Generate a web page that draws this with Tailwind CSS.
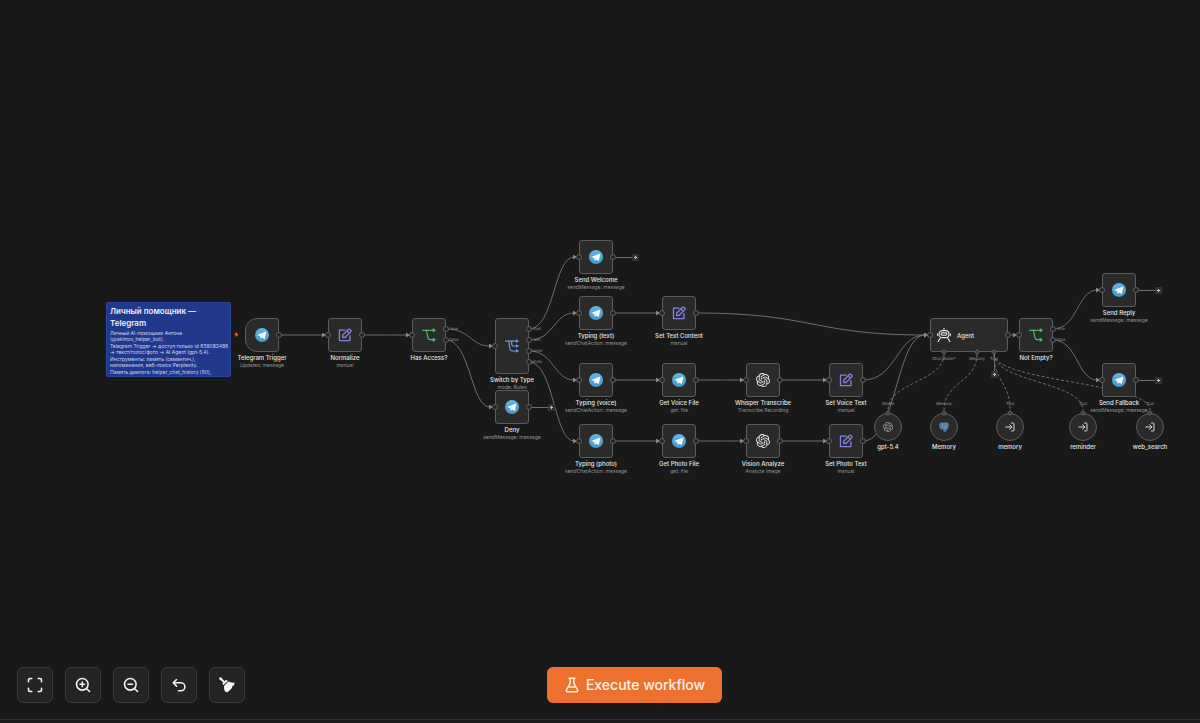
<!DOCTYPE html>
<html lang="ru">
<head>
    <meta charset="UTF-8">
    <meta name="viewport" content="width=device-width, initial-scale=1.0">
    <title>Личный помощник — Telegram</title>
    <script src="https://cdn.jsdelivr.net/npm/@tailwindcss/browser@4"></script>
</head>
<body class="bg-[#191919] text-[#e6e6e6] min-h-screen flex flex-col font-['Inter','Liberation_Sans',sans-serif]">

    <!-- Icons -->
    <svg class="absolute size-0" xmlns="http://www.w3.org/2000/svg" aria-hidden="true">
        <defs>
            <linearGradient id="tg-fill" x1="0" y1="0" x2="0" y2="1">
                <stop offset="0" stop-color="#62b6e6"/>
                <stop offset="1" stop-color="#4398cd"/>
            </linearGradient>
        </defs>
        <symbol id="telegram" viewBox="0 0 24 24">
            <circle cx="12" cy="12" r="12" fill="url(#tg-fill)"/>
            <path d="M4.8 11.7 18.2 6.3c.7-.2 1.2.2 1 1.1l-2.2 10.6c-.2.8-.7 1-1.3.6l-3.4-2.5-1.7 1.7c-.4.4-.9.3-1-.3l-1.1-3.8-3.5-1.1c-.7-.2-.7-.7-.2-.9Z" fill="#fff"/>
            <path d="m9 13.6 7-4.8-5.6 5.9-.3 2.4Z" fill="#bcdcf0"/>
        </symbol>
        <symbol id="pen" viewBox="0 0 24 24">
            <g fill="none" stroke="#8482e0" stroke-width="2.2" stroke-linejoin="round" stroke-linecap="round">
                <path d="M12 3.5H2.5V21.5H20.5V13"/>
                <path d="M8 16.3v-4L17.7 2.6a2.3 2.3 0 0 1 3.2 0l.8.8a2.3 2.3 0 0 1 0 3.2L12 16.3Z"/>
                <path d="m15.5 5 3.8 3.8"/>
            </g>
        </symbol>
        <symbol id="branch" viewBox="0 0 24 24">
            <g fill="none" stroke="#4fbf5b" stroke-width="2">
                <path d="M0 4H21"/>
                <path d="M6 4c3 0 2.500 5 3.200 8.500s1.300 7.500 4.800 7.500h7"/>
            </g>
            <path d="m18.500 .2 5.500 3.800-5.500 3.800ZM18.500 16.200l5.500 3.800-5.500 3.800Z" fill="#4fbf5b"/>
        </symbol>
        <symbol id="switch" viewBox="0 0 24 24">
            <g fill="none" stroke="#6d9df0" stroke-width="2">
                <path d="M0 3.500H21"/>
                <path d="M11.500 3.500v5.500c0 2 1 3 3 3h7"/>
                <path d="M5.500 3.500c2 0 1.500 4 2 8 .4 5 1.300 9 5 9h8"/>
            </g>
            <path d="m19 .3 5 3.200-5 3.200ZM19 8.800l5 3.200-5 3.200ZM19 17.300l5 3.200-5 3.200Z" fill="#6d9df0"/>
        </symbol>
        <symbol id="openai" viewBox="0 0 24 24">
            <path fill="currentColor" d="M22.2819 9.8211a5.9847 5.9847 0 0 0-.5157-4.9108 6.0462 6.0462 0 0 0-6.5098-2.9A6.0651 6.0651 0 0 0 4.9807 4.1818a5.9847 5.9847 0 0 0-3.9977 2.9 6.0462 6.0462 0 0 0 .7427 7.0966 5.98 5.98 0 0 0 .511 4.9107 6.051 6.051 0 0 0 6.5146 2.9001A5.9847 5.9847 0 0 0 13.2599 24a6.0557 6.0557 0 0 0 5.7718-4.2058 5.9894 5.9894 0 0 0 3.9977-2.9001 6.0557 6.0557 0 0 0-.7475-7.0729zm-9.022 12.6081a4.4755 4.4755 0 0 1-2.8764-1.0408l.1419-.0804 4.7783-2.7582a.7948.7948 0 0 0 .3927-.6813v-6.7369l2.02 1.1686a.071.071 0 0 1 .038.052v5.5826a4.504 4.504 0 0 1-4.4945 4.4944zm-9.6607-4.1254a4.4708 4.4708 0 0 1-.5346-3.0137l.142.0852 4.783 2.7582a.7712.7712 0 0 0 .7806 0l5.8428-3.3685v2.3324a.0804.0804 0 0 1-.0332.0615L9.74 19.9502a4.4992 4.4992 0 0 1-6.1408-1.6464zM2.3408 7.8956a4.485 4.485 0 0 1 2.3655-1.9728V11.6a.7664.7664 0 0 0 .3879.6765l5.8144 3.3543-2.0201 1.1685a.0757.0757 0 0 1-.071 0l-4.8303-2.7865A4.504 4.504 0 0 1 2.3408 7.872zm16.5963 3.8558L13.1038 8.364 15.1192 7.2a.0757.0757 0 0 1 .071 0l4.8303 2.7913a4.4944 4.4944 0 0 1-.6765 8.1042v-5.6772a.79.79 0 0 0-.407-.667zm2.0107-3.0231l-.142-.0852-4.7735-2.7818a.7759.7759 0 0 0-.7854 0L9.409 9.2297V6.8974a.0662.0662 0 0 1 .0284-.0615l4.8303-2.7866a4.4992 4.4992 0 0 1 6.6802 4.66zM8.3065 12.863l-2.02-1.1638a.0804.0804 0 0 1-.038-.0567V6.0742a4.4992 4.4992 0 0 1 7.3757-3.4537l-.142.0805L8.704 5.459a.7948.7948 0 0 0-.3927.6813zm1.0976-2.3654l2.602-1.4998 2.6069 1.4998v2.9994l-2.5974 1.4997-2.6067-1.4997Z"/>
        </symbol>
        <symbol id="robot" viewBox="0 0 24 24">
            <g fill="none" stroke="#e8e8e8" stroke-width="1.9" stroke-linecap="round" stroke-linejoin="round">
                <path d="M12 1v3"/>
                <rect x="3.5" y="4.5" width="17" height="12" rx="6"/>
                <rect x="7" y="8.300" width="10" height="4.200" rx="2.100"/>
                <path d="M1.200 10v3M22.800 10v3M5.500 17.500 2 23M18.500 17.500 22 23"/>
            </g>
        </symbol>
        <symbol id="postgres" viewBox="0 0 24 24">
            <path d="M6 2C2 2 .8 5 1.500 9c.7 4 2.300 8.500 4.200 8.500 1 0 1.600-1.200 2.600-2.200.5.700 1.400 1 2.200.8-.2 3 .1 6.900 3.200 6.900 3.600 0 3.600-3.500 3.900-6.800 1.800.3 4-.2 4.900-1.500-2.200.2-2.600-.5-2.100-1.300C22.300 10 23.800 5 22 3c-2-1.900-5-1.500-6.700-.7C13 1.400 11 1.700 9.500 2.700 8.500 2.200 7.200 2 6 2Z" fill="#3f78b0" stroke="#8fb0cf" stroke-width="1"/>
            <path d="M9.500 3C7.500 5.500 8.500 9 8.300 12v3M15.300 2.500c2.500 2 3.700 6 2.300 9.500-.3 1.500.2 2.500.6 3.500M13.800 8v9.500" fill="none" stroke="#c3d4e4" stroke-width="1"/>
        </symbol>
        <symbol id="subflow" viewBox="0 0 24 24">
            <path d="M2 12h14M11 6.500l5.500 5.500-5.500 5.500M15.500 2.500H20a1.500 1.500 0 0 1 1.500 1.500v16a1.500 1.500 0 0 1-1.500 1.500h-4.500" fill="none" stroke="#dcdcdc" stroke-width="2.400" stroke-linecap="round" stroke-linejoin="round"/>
        </symbol>
    </svg>

    <main id="canvas" class="relative flex-1 overflow-hidden">
        <svg class="absolute inset-0 size-full" xmlns="http://www.w3.org/2000/svg" aria-hidden="true">
            <defs>
                <marker id="arrow" viewBox="0 0 4 5" refX="1" refY="2.5" markerWidth="4" markerHeight="5" markerUnits="userSpaceOnUse">
                    <path d="M0 0 4 2.500 0 5Z" fill="#8a8a8a"/>
                </marker>
            </defs>
            <g id="edges" fill="none" stroke="#6e6e6e" stroke-width="1"></g>
            <g id="dashes" fill="none" stroke="#6e6e6e" stroke-width="1" stroke-dasharray="3 2"></g>
        </svg>

        <section class="absolute left-[106px] top-[302px] w-[125px] h-[75px] overflow-hidden rounded-xs bg-[#22388a] border border-[#2a439c] px-[3px] pt-[2px]">
            <h1 class="text-[8px] leading-[12px] font-semibold text-[#eceffa] whitespace-nowrap">Личный помощник —<br>Telegram</h1>
            <div class="flex flex-col gap-px pt-px text-[5px] leading-[6px] text-[#cfd6f0] whitespace-nowrap">
                <p>Личный AI-помощник Антона<br>(@akimov_helper_bot).</p>
                <p>Telegram Trigger → доступ только id 638082486<br>→ текст/голос/фото → AI Agent (gpt-5.4).</p>
                <p>Инструменты: память (семантич.),<br>напоминания, веб-поиск Perplexity.</p>
                <p>Память диалога: helper_chat_history (50),</p>
            </div>
        </section>

        <svg class="absolute left-[234px] top-[332px] size-[5px]" viewBox="0 0 10 10" aria-hidden="true">
            <path d="M5.500 0 0 5.600h3.800L3.500 10 10 4.400H6Z" fill="#ee6c3c"/>
        </svg>
    </main>

    <!-- Canvas controls -->
    <div class="absolute inset-x-0 bottom-5 flex items-center pl-[17px] pr-44">
        <div class="flex gap-3">
            <button type="button" aria-label="Zoom to fit" class="size-9 flex items-center justify-center rounded-md bg-[#242424] border border-[#383838]">
                <svg class="size-4" viewBox="0 0 16 16" fill="none" stroke="#f2f2f2" stroke-width="1.6" stroke-linecap="round" stroke-linejoin="round"><path d="M1.500 4.800V3a1.500 1.500 0 0 1 1.500-1.500h1.800M11.200 1.500H13A1.500 1.500 0 0 1 14.500 3v1.800M14.500 11.200V13a1.500 1.500 0 0 1-1.500 1.500h-1.800M4.800 14.500H3A1.500 1.500 0 0 1 1.500 13v-1.800"/></svg>
            </button>
            <button type="button" aria-label="Zoom in" class="size-9 flex items-center justify-center rounded-md bg-[#242424] border border-[#383838]">
                <svg class="size-4" viewBox="0 0 16 16" fill="none" stroke="#f2f2f2" stroke-width="1.6" stroke-linecap="round"><circle cx="7.300" cy="7.300" r="5.800"/><path d="m11.500 11.500 3 3M7.300 5v4.600M5 7.300h4.600"/></svg>
            </button>
            <button type="button" aria-label="Zoom out" class="size-9 flex items-center justify-center rounded-md bg-[#242424] border border-[#383838]">
                <svg class="size-4" viewBox="0 0 16 16" fill="none" stroke="#f2f2f2" stroke-width="1.6" stroke-linecap="round"><circle cx="7.300" cy="7.300" r="5.800"/><path d="m11.500 11.500 3 3M5 7.300h4.600"/></svg>
            </button>
            <button type="button" aria-label="Reset zoom" class="size-9 flex items-center justify-center rounded-md bg-[#242424] border border-[#383838]">
                <svg class="size-4" viewBox="0 0 16 16" fill="none" stroke="#f2f2f2" stroke-width="1.6" stroke-linecap="round" stroke-linejoin="round"><path d="M5.500 2.500 2.200 5.800l3.300 3.300M2.500 5.800h7.400a4 4 0 0 1 0 8H7.500"/></svg>
            </button>
            <button type="button" aria-label="Tidy up" class="size-9 flex items-center justify-center rounded-md bg-[#242424] border border-[#383838]">
                <svg class="size-4" viewBox="0 0 16 16" fill="#fafafa"><path d="M.3 1C.8.200 1.700-.1 2.500.800L5.400 4.200l1.200-1c.5-.4 1-.3 1.400.1l.7.7-4.300 4-.7-.8c-.4-.5-.3-1 .1-1.400l.6-.6L.8 2.700C.2 2.200 0 1.600.3 1ZM9.300 4.600c2 .9 4.100 1.200 6.500 1.200-.4 1.300-.9 2.400-1.600 3.400l-1.200-.3.3 1.700c-1.300 1.700-3 3.200-5.300 4.900l-1.200-1.200-.2.900C5.300 13.400 4.800 11.300 5 8.900Z"/></svg>
            </button>
        </div>
        <div class="flex-1 flex justify-center">
            <button type="button" class="h-9 px-[17px] flex items-center gap-1.5 rounded-md bg-[#ee722f] text-[#fdf1e6] text-sm font-medium whitespace-nowrap">
                <svg class="size-4" viewBox="0 0 16 16" fill="none" stroke="currentColor" stroke-width="1.4" stroke-linecap="round" stroke-linejoin="round" aria-hidden="true"><path d="M5 1.200h6M6.200 1.200v5L2.500 12.800c-.6 1.100 0 2 1.200 2h8.600c1.200 0 1.800-.9 1.200-2L9.800 6.200v-5M4.200 10h7.600"/></svg>
                Execute workflow
            </button>
        </div>
    </div>

    <div class="h-1 border-t border-[#303030] bg-[#1b1b1b]"></div>

    <script>
        // x / y: left top corner of the node on the canvas
        const nodes = [
            { x: 245, y: 318, icon: 'telegram', name: 'Telegram Trigger', sub: 'Updates: message', kind: 'trigger' },
            { x: 328, y: 318, icon: 'pen', name: 'Normalize', sub: 'manual' },
            { x: 412, y: 318, icon: 'branch', name: 'Has Access?', outs: ['true', 'false'] },
            { x: 495, y: 318, icon: 'switch', name: 'Switch by Type', sub: 'mode: Rules', kind: 'tall', outs: ['start', 'text', 'voice', 'photo'] },
            { x: 495, y: 390, icon: 'telegram', name: 'Deny', sub: 'sendMessage: message', add: true },
            { x: 579, y: 240, icon: 'telegram', name: 'Send Welcome', sub: 'sendMessage: message', add: true },
            { x: 579, y: 296, icon: 'telegram', name: 'Typing (text)', sub: 'sendChatAction: message' },
            { x: 579, y: 363, icon: 'telegram', name: 'Typing (voice)', sub: 'sendChatAction: message' },
            { x: 579, y: 424, icon: 'telegram', name: 'Typing (photo)', sub: 'sendChatAction: message' },
            { x: 662, y: 296, icon: 'pen', name: 'Set Text Content', sub: 'manual' },
            { x: 662, y: 363, icon: 'telegram', name: 'Get Voice File', sub: 'get: file' },
            { x: 662, y: 424, icon: 'telegram', name: 'Get Photo File', sub: 'get: file' },
            { x: 746, y: 363, icon: 'openai', name: 'Whisper Transcribe', sub: 'Transcribe Recording' },
            { x: 746, y: 424, icon: 'openai', name: 'Vision Analyze', sub: 'Analyze Image' },
            { x: 829, y: 363, icon: 'pen', name: 'Set Voice Text', sub: 'manual' },
            { x: 829, y: 424, icon: 'pen', name: 'Set Photo Text', sub: 'manual' },
            { x: 930, y: 318, icon: 'robot', name: 'Agent', kind: 'agent' },
            { x: 1019, y: 318, icon: 'branch', name: 'Not Empty?', outs: ['true', 'false'] },
            { x: 1102, y: 273, icon: 'telegram', name: 'Send Reply', sub: 'sendMessage: message', add: true },
            { x: 1102, y: 363, icon: 'telegram', name: 'Send Fallback', sub: 'sendMessage: message', add: true },
            { x: 874, y: 413, icon: 'openai', name: 'gpt-5.4', kind: 'round', top: 'Model' },
            { x: 930, y: 413, icon: 'postgres', name: 'Memory', kind: 'round', top: 'Memory' },
            { x: 996, y: 413, icon: 'subflow', name: 'memory', kind: 'round', top: 'Tool' },
            { x: 1069, y: 413, icon: 'subflow', name: 'reminder', kind: 'round', top: 'Tool' },
            { x: 1136, y: 413, icon: 'subflow', name: 'web_search', kind: 'round', top: 'Tool' }
        ];

        // [x1, y1, x2, y2]
        const edges = [
            [279, 335, 328, 335], [362, 335, 412, 335],
            [446, 329, 495, 346], [446, 340, 495, 407],
            [529, 329, 579, 257], [529, 340, 579, 313], [529, 351, 579, 380], [529, 362, 579, 441],
            [613, 313, 662, 313], [613, 380, 662, 380], [613, 441, 662, 441],
            [696, 380, 746, 380], [696, 441, 746, 441],
            [780, 380, 829, 380], [780, 441, 829, 441],
            [696, 313, 930, 335], [863, 380, 930, 335], [863, 441, 930, 335],
            [1008, 335, 1019, 335],
            [1053, 329, 1102, 290], [1053, 340, 1102, 380]
        ];
        const subEdges = [[944, 888], [977, 944], [994, 1010], [994, 1083], [994, 1150]];
        const agentPorts = [[944, 'Chat Model*'], [977, 'Memory'], [994, 'Tool']];

        const boxes = {
            normal: 'w-[34px] h-[34px] rounded-[3px] justify-center',
            trigger: 'w-[34px] h-[34px] rounded-[3px] rounded-l-[12px] justify-center',
            tall: 'w-[34px] h-[56px] rounded-[3px] justify-center',
            agent: 'w-[78px] h-[34px] rounded-[3px] gap-[6px] pl-[6px]',
            round: 'w-[28px] h-[28px] rounded-full justify-center'
        };
        const widths = { normal: 34, trigger: 34, tall: 34, agent: 78, round: 28 };
        const heights = { normal: 34, trigger: 34, tall: 56, agent: 34, round: 28 };
        const iconSizes = { round: 'size-[10px] text-[#9a9a9a]', other: 'size-[14px] text-[#ececec]' };

        const canvas = document.getElementById('canvas');

        function add(html) {
            canvas.insertAdjacentHTML('beforeend', html);
        }

        function port(x, y) {
            add(`<i class="absolute size-[6px] -ml-[3px] -mt-[3px] rounded-full bg-[#222] border border-[#626262]" style="left:${x}px;top:${y}px"></i>`);
        }

        function diamond(x, y) {
            add(`<i class="absolute size-[4px] -ml-[2px] -mt-[2px] rotate-45 bg-[#333] border border-[#626262]" style="left:${x}px;top:${y}px"></i>`);
        }

        function smallText(x, y, text) {
            add(`<div class="absolute w-0 flex justify-center text-[4px] leading-[6px] -mt-[3px] text-[#9a9a9a] whitespace-nowrap [text-rendering:geometricPrecision]" style="left:${x}px;top:${y}px"><span>${text}</span></div>`);
        }

        function plus(x, y) {
            add(`<button type="button" aria-label="Add node" class="absolute size-[7px] -ml-[3px] -mt-[3px] rounded-[1px] bg-[#343434] flex items-center justify-center" style="left:${x}px;top:${y}px">
                <svg class="size-[5px]" viewBox="0 0 5 5"><path d="M2.500 1v3M1 2.500h3" stroke="#c4c4c4" stroke-width="1"/></svg>
            </button>`);
        }

        edges.forEach(([x1, y1, x2, y2]) => {
            const end = x2 - 5;
            const mid = (x1 + x2) / 2;
            document.getElementById('edges').insertAdjacentHTML('beforeend',
                `<path d="M${x1} ${y1}C${mid} ${y1} ${mid} ${y2} ${end} ${y2}" marker-end="url(#arrow)"/>`);
        });
        subEdges.forEach(([x1, x2]) => {
            document.getElementById('dashes').insertAdjacentHTML('beforeend',
                `<path d="M${x1} 354C${x1} 382 ${x2} 382 ${x2} 410"/>`);
        });

        nodes.forEach(n => {
            const kind = n.kind || 'normal';
            const w = widths[kind];
            const h = heights[kind];
            const cy = n.y + h / 2;
            const inside = kind === 'agent';
            add(`<div class="absolute flex flex-col items-center whitespace-nowrap" style="left:${n.x}px;top:${n.y}px;width:${w}px">
                <div class="${boxes[kind]} shrink-0 flex items-center bg-[#2a2a2a] border border-[#5c5c5c]">
                    <svg class="${kind === 'round' ? iconSizes.round : iconSizes.other} shrink-0" aria-hidden="true"><use href="#${n.icon}"/></svg>
                    ${inside ? `<span class="text-[6px] font-medium">${n.name}</span>` : ''}
                </div>
                ${inside ? '' : `<p class="mt-[2px] text-[6px] leading-[8px] font-medium">${n.name}</p>`}
                ${n.sub ? `<p class="text-[5px] leading-[6px] text-[#949494]">${n.sub}</p>` : ''}
            </div>`);

            if (kind === 'round') {
                diamond(n.x + 14, n.y);
                smallText(n.x + 14, n.y - 9, n.top);
                return;
            }
            if (kind !== 'trigger') port(n.x, cy);
            if (n.outs) {
                n.outs.forEach((label, i) => {
                    port(n.x + w, n.y + 11 + i * 11);
                    smallText(n.x + w + 8, n.y + 11 + i * 11, label);
                });
            } else {
                port(n.x + w, cy);
            }
            if (n.add) {
                add(`<i class="absolute h-px w-[18px] bg-[#6e6e6e]" style="left:${n.x + w + 3}px;top:${cy}px"></i>`);
                plus(n.x + w + 22, cy);
            }
        });

        agentPorts.forEach(([x, label]) => {
            diamond(x, 352);
            smallText(x, 359, label);
        });
        add('<i class="absolute left-[994px] top-[354px] w-px h-[18px] bg-[#6e6e6e]"></i>');
        plus(994, 374);
    </script>

</body>
</html>
